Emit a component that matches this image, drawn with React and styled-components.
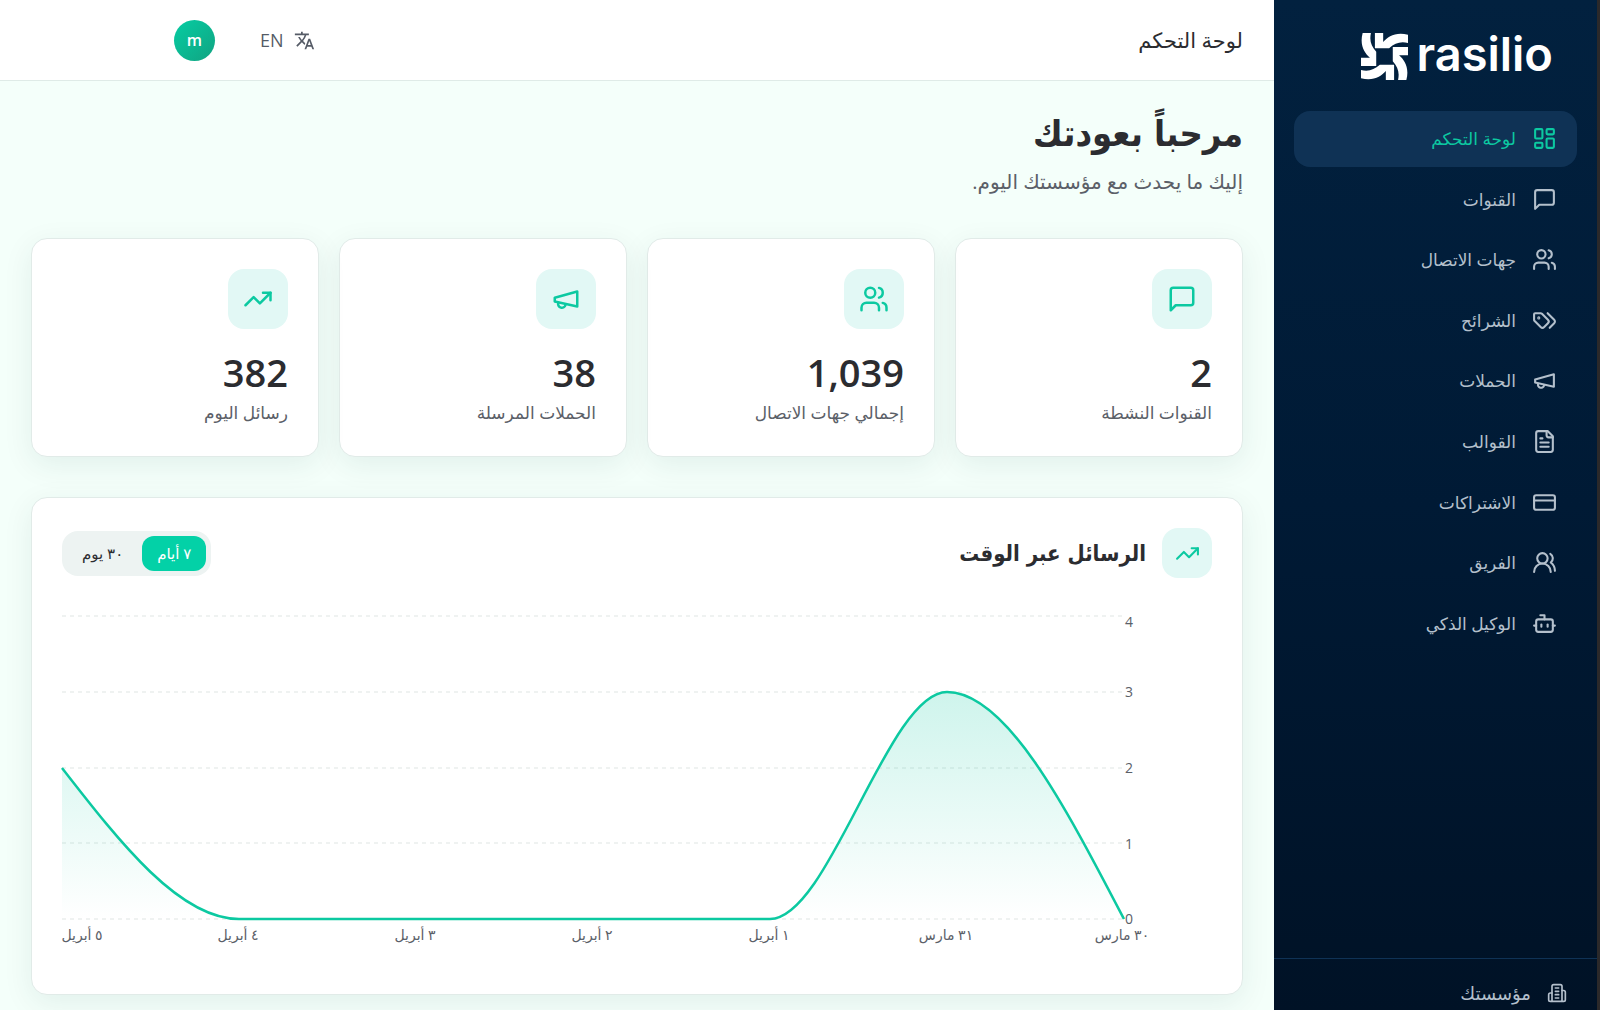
//---------------------- IMPORT -----------------------------
import { useState } from "react";
import styled, { createGlobalStyle } from "styled-components";
import { LayoutDashboard, Users, CreditCard, UsersRound, Bot, TrendingUp } from "lucide-react";
import { MdTranslate } from "react-icons/md";

//---------------------- ICONS ------------------------------
const Outline = ({ size = 24, children }) => (
    <svg width={size} height={size} viewBox="0 0 24 24" fill="none" stroke="currentColor"
        strokeWidth="2" strokeLinecap="round" strokeLinejoin="round" aria-hidden="true">
        {children}
    </svg>
);
const Message = (props) => (
    <Outline {...props}>
        <path d="M21 15a2 2 0 0 1-2 2H7l-4 4V5a2 2 0 0 1 2-2h14a2 2 0 0 1 2 2z" />
    </Outline>
);
const Megaphone = (props) => (
    <Outline {...props}>
        <path d="m3 11 18-5v12L3 14v-3z" />
        <path d="M11.6 16.8a3 3 0 1 1-5.8-1.6" />
    </Outline>
);
const Tags = (props) => (
    <Outline {...props}>
        <path d="m15 5 6.3 6.3a2.4 2.4 0 0 1 0 3.4L17 19" />
        <path d="M9.586 5.586A2 2 0 0 0 8.172 5H3a1 1 0 0 0-1 1v5.172a2 2 0 0 0 .586 1.414L8.29 18.29a2.426 2.426 0 0 0 3.42 0l3.58-3.58a2.426 2.426 0 0 0 0-3.42z" />
        <circle cx="6.5" cy="9.5" r=".5" fill="currentColor" />
    </Outline>
);
const Document = (props) => (
    <Outline {...props}>
        <path d="M15 2H6a2 2 0 0 0-2 2v16a2 2 0 0 0 2 2h12a2 2 0 0 0 2-2V7Z" />
        <path d="M14 2v4a2 2 0 0 0 2 2h4" />
        <path d="M10 9H8M16 13H8M16 17H8" />
    </Outline>
);
const Building = (props) => (
    <Outline {...props}>
        <path d="M6 22V4a2 2 0 0 1 2-2h8a2 2 0 0 1 2 2v18Z" />
        <path d="M6 12H4a2 2 0 0 0-2 2v6a2 2 0 0 0 2 2h2" />
        <path d="M18 9h2a2 2 0 0 1 2 2v9a2 2 0 0 1-2 2h-2" />
        <path d="M10 6h4M10 10h4M10 14h4M10 18h4" />
    </Outline>
);
const LogoMark = () => (
    <svg width="47" height="47" viewBox="-71 -71 142 142" fill="#fff" aria-hidden="true">
        {[0, 90, 180, 270].map((angle) => (
            <path key={angle} transform={`rotate(${angle})`}
                d="M-29-71H-4V-44C10-60 34-76 71-66V-41C46-46 32-40 14-25H-29Z" />
        ))}
    </svg>
);

//---------------------- DATA -------------------------------
const menu = [
    { label: "لوحة التحكم", icon: LayoutDashboard, active: true },
    { label: "القنوات", icon: Message },
    { label: "جهات الاتصال", icon: Users },
    { label: "الشرائح", icon: Tags },
    { label: "الحملات", icon: Megaphone },
    { label: "القوالب", icon: Document },
    { label: "الاشتراكات", icon: CreditCard },
    { label: "الفريق", icon: UsersRound },
    { label: "الوكيل الذكي", icon: Bot },
];
const stats = [
    { label: "القنوات النشطة", value: "2", icon: Message },
    { label: "إجمالي جهات الاتصال", value: "1,039", icon: Users },
    { label: "الحملات المرسلة", value: "38", icon: Megaphone },
    { label: "رسائل اليوم", value: "382", icon: TrendingUp },
];
const ranges = ["٧ أيام", "٣٠ يوم"];
const yTicks = [
    { value: 4, line: 12, text: 23 },
    { value: 3, line: 88, text: 93 },
    { value: 2, line: 164, text: 169 },
    { value: 1, line: 239, text: 245 },
    { value: 0, line: 315, text: 320 },
];
const xTicks = [
    { label: "٣٠ مارس", x: 1060 },
    { label: "٣١ مارس", x: 884 },
    { label: "١ أبريل", x: 707 },
    { label: "٢ أبريل", x: 530 },
    { label: "٣ أبريل", x: 353 },
    { label: "٤ أبريل", x: 176 },
    { label: "٥ أبريل", x: 20 },
];
const curve = "M1062 315C1003 202 944 88 885 88C826 88 767 315 708 315L177 315C118 315 59 240 0 164";

//---------------------- COMPONENT --------------------------
const MessagesChart = () => (
    <Chart viewBox="0 0 1150 360" role="img" aria-label="الرسائل عبر الوقت">
        <defs>
            <linearGradient id="area" x1="0" y1="0" x2="0" y2="1">
                <stop offset="0" stopColor="#0cc9a1" stopOpacity="0.2" />
                <stop offset="1" stopColor="#0cc9a1" stopOpacity="0" />
            </linearGradient>
        </defs>
        {yTicks.map((tick) => (
            <g key={tick.value}>
                <line x1="0" x2="1062" y1={tick.line} y2={tick.line} stroke="#dfe5e3" strokeDasharray="4 4" />
                <text x="1067" y={tick.text} textAnchor="middle">{tick.value}</text>
            </g>
        ))}
        <path d={`${curve}V315Z`} fill="url(#area)" />
        <path d={curve} fill="none" stroke="#0cc9a1" strokeWidth="2.5" />
        {xTicks.map((tick) => (
            <text key={tick.label} x={tick.x} y="336" textAnchor="middle">{tick.label}</text>
        ))}
    </Chart>
);

const App = () => {
    const [range, setRange] = useState(0);

    //render
    return (
        <Shell dir="rtl" lang="ar">
            <GlobalStyle />
            <Sidebar>
                <Logo href="#" dir="ltr">
                    <LogoMark />
                    <Wordmark>rasilio</Wordmark>
                </Logo>
                <Menu>
                    {menu.map(({ label, icon: Icon, active }) => (
                        <MenuItem key={label} href="#" $active={active}>
                            <Icon size={25} />
                            {label}
                        </MenuItem>
                    ))}
                </Menu>
                <Organisation href="#">
                    <Building size={20} />
                    مؤسستك
                </Organisation>
            </Sidebar>
            <Main>
                <Header>
                    <HeaderTitle>لوحة التحكم</HeaderTitle>
                    <HeaderTools>
                        <LanguageButton type="button">
                            <MdTranslate size={21} />
                            EN
                        </LanguageButton>
                        <Avatar type="button">m</Avatar>
                    </HeaderTools>
                </Header>
                <Content>
                    <Welcome>مرحباً بعودتك</Welcome>
                    <Lead>إليك ما يحدث مع مؤسستك اليوم.</Lead>
                    <StatGrid>
                        {stats.map(({ label, value, icon: Icon }) => (
                            <Card key={label}>
                                <IconTile $size={60}><Icon size={30} /></IconTile>
                                <StatValue>{value}</StatValue>
                                <StatLabel>{label}</StatLabel>
                            </Card>
                        ))}
                    </StatGrid>
                    <Card>
                        <CardHeader>
                            <CardHeading>
                                <IconTile $size={50}><TrendingUp size={25} /></IconTile>
                                <CardTitle>الرسائل عبر الوقت</CardTitle>
                            </CardHeading>
                            <RangeSwitch>
                                {ranges.map((label, index) => (
                                    <RangeButton key={label} type="button" $active={range === index}
                                        onClick={() => setRange(index)}>
                                        {label}
                                    </RangeButton>
                                ))}
                            </RangeSwitch>
                        </CardHeader>
                        <MessagesChart />
                    </Card>
                </Content>
            </Main>
        </Shell>
    );
};
export default App;

//----------------------- STYLE -----------------------------
const GlobalStyle = createGlobalStyle`
    * {
        box-sizing: border-box;
    }
    body {
        margin: 0;
        background: #f4fffa;
        color: #2b2c30;
        font-family: "Open Sans", "DejaVu Sans", sans-serif;
    }
    h1, h2, p {
        margin: 0;
    }
    h1, h2 {
        font-family: "DejaVu Sans Condensed", "DejaVu Sans", sans-serif;
    }
    button {
        border: none;
        padding: 0;
        background: none;
        font-family: inherit;
        cursor: pointer;
    }
    a {
        text-decoration: none;
    }
`;
const Shell = styled.div`
    display: flex;
    height: 100vh;
    overflow: hidden;
    border-right: 3px solid #2b292a;
`;
const Sidebar = styled.aside`
    display: flex;
    flex-direction: column;
    flex-shrink: 0;
    width: 323px;
    background: linear-gradient(180deg, #02213f 0%, #001a35 50%, #001226 100%);
`;
const Logo = styled.a`
    display: flex;
    align-items: center;
    justify-content: flex-end;
    gap: 8px;
    height: 111px;
    padding: 2px 44px 0 0;
`;
const Wordmark = styled.span`
    padding-bottom: 6px;
    color: #fff;
    font-family: Inter, sans-serif;
    font-size: 47px;
    font-weight: 600;
    line-height: 48px;
`;
const Menu = styled.nav`
    display: grid;
    grid-auto-rows: 1fr;
    gap: 5px;
    height: 540px;
    padding: 0 20px;
`;
const MenuItem = styled.a`
    display: flex;
    align-items: center;
    gap: 16px;
    padding: 0 20px;
    border-radius: 16px;
    background: ${({ $active }) => ($active ? "#0f3255" : "transparent")};
    color: ${({ $active }) => ($active ? "#0cc9a1" : "#b4c0cc")};
    font-size: 17px;
`;
const Organisation = styled.a`
    display: flex;
    align-items: center;
    gap: 16px;
    height: 52px;
    margin-top: auto;
    padding: 16px 30px 0;
    border-top: 1px solid #0f3255;
    color: #b4c0cc;
    font-size: 18px;
`;
const Main = styled.main`
    flex: 1;
    min-width: 0;
`;
const Header = styled.header`
    display: flex;
    align-items: center;
    justify-content: space-between;
    height: 81px;
    padding: 0 31px 0 174px;
    border-bottom: 1px solid #dfebe7;
    background: #fff;
`;
const HeaderTitle = styled.p`
    font-size: 21px;
`;
const HeaderTools = styled.div`
    display: flex;
    align-items: center;
    gap: 45px;
`;
const LanguageButton = styled.button`
    display: flex;
    align-items: center;
    gap: 10px;
    color: #555b66;
    font-size: 18px;
`;
const Avatar = styled.button`
    width: 41px;
    height: 41px;
    border-radius: 50%;
    background: linear-gradient(135deg, #06cda3, #11a381);
    color: #fff;
    font-size: 16px;
    font-weight: 600;
`;
const Content = styled.div`
    padding: 28px 31px;
`;
const Welcome = styled.h1`
    font-size: 36px;
    font-weight: 700;
    line-height: 50px;
`;
const Lead = styled.p`
    margin-top: 7px;
    color: #5b6068;
    font-size: 20px;
    line-height: 32px;
`;
const StatGrid = styled.div`
    display: grid;
    grid-template-columns: repeat(4, 1fr);
    gap: 20px;
    margin: 40px 0;
`;
const Card = styled.section`
    padding: 30px;
    border: 1px solid #e1ebe8;
    border-radius: 16px;
    background: #fff;
    box-shadow: 0 8px 30px rgba(0, 70, 60, 0.08);
`;
const IconTile = styled.div`
    display: flex;
    align-items: center;
    justify-content: center;
    width: ${({ $size }) => $size}px;
    height: ${({ $size }) => $size}px;
    border-radius: 16px;
    background: #e2f8f5;
    color: #0cc9a1;
`;
const StatValue = styled.p`
    margin-top: 19px;
    font-size: 38px;
    font-weight: 600;
    line-height: 48px;
`;
const StatLabel = styled.p`
    margin-top: 4px;
    color: #5b6068;
    font-size: 17px;
    line-height: 26px;
`;
const CardHeader = styled.div`
    display: flex;
    align-items: center;
    justify-content: space-between;
`;
const CardHeading = styled.div`
    display: flex;
    align-items: center;
    gap: 16px;
`;
const CardTitle = styled.h2`
    font-size: 22px;
    font-weight: 700;
`;
const RangeSwitch = styled.div`
    display: flex;
    gap: 4px;
    padding: 5px;
    border-radius: 16px;
    background: #edf3f2;
`;
const RangeButton = styled.button`
    height: 35px;
    padding: 0 15px;
    border-radius: 12px;
    background: ${({ $active }) => ($active ? "#03d1a7" : "transparent")};
    color: ${({ $active }) => ($active ? "#fff" : "#2b2c30")};
    font-size: 15px;
`;
const Chart = styled.svg`
    display: block;
    width: 100%;
    margin-top: 26px;
    overflow: visible;

    text {
        fill: #5b6068;
        font-size: 14px;
    }
`;
